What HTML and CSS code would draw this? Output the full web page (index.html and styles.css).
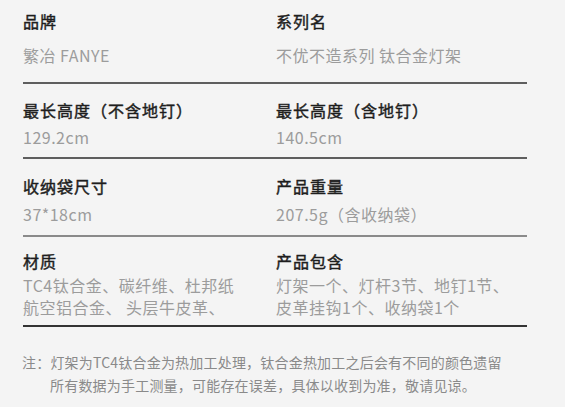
FILE: index.html
```html
<!DOCTYPE html>
<html lang="zh-CN">
<head>
<meta charset="utf-8">
<link rel="stylesheet" href="styles.css">
</head>
<body>
<div class="page">
  <div class="specs">
    <div class="row row-1">
      <div class="cell">
        <div class="title">品牌</div>
        <div class="value">繁冶 FANYE</div>
      </div>
      <div class="cell">
        <div class="title">系列名</div>
        <div class="value">不优不造系列 钛合金灯架</div>
      </div>
    </div>
    <div class="row row-2">
      <div class="cell">
        <div class="title">最长高度（不含地钉）</div>
        <div class="value">129.2cm</div>
      </div>
      <div class="cell">
        <div class="title">最长高度（含地钉）</div>
        <div class="value">140.5cm</div>
      </div>
    </div>
    <div class="row row-3">
      <div class="cell">
        <div class="title">收纳袋尺寸</div>
        <div class="value">37*18cm</div>
      </div>
      <div class="cell">
        <div class="title">产品重量</div>
        <div class="value">207.5g（含收纳袋）</div>
      </div>
    </div>
    <div class="row row-4">
      <div class="cell">
        <div class="title">材质</div>
        <div class="value">TC4钛合金、碳纤维、杜邦纸<br>航空铝合金、 头层牛皮革、</div>
      </div>
      <div class="cell">
        <div class="title">产品包含</div>
        <div class="value">灯架一个、灯杆3节、地钉1节、<br>皮革挂钩1个、收纳袋1个</div>
      </div>
    </div>
  </div>
  <div class="note">
    <div class="note-line">注：灯架为TC4钛合金为热加工处理，钛合金热加工之后会有不同的颜色遗留</div>
    <div class="note-line indent">所有数据为手工测量，可能存在误差，具体以收到为准，敬请见谅。</div>
  </div>
</div>
</body>
</html>
```

FILE: styles.css
```css
html, body {
  margin: 0;
  padding: 0;
  background: #f4f4f4;
}

body {
  font-family: "Noto Sans CJK SC", "Noto Sans", sans-serif;
  width: 565px;
  height: 407px;
  overflow: hidden;
}

.page {
  padding: 0 0 0 23px;
}

.specs {
  width: 504px;
}

.row {
  display: grid;
  grid-template-columns: 253px 1fr;
  border-bottom: 2px solid #5e5e5e;
}

.title {
  font-size: 16px;
  line-height: 22px;
  font-weight: 400;
  color: #1e1e1e;
  -webkit-text-stroke: 0.45px #1e1e1e;
  letter-spacing: 1px;
}

.value {
  font-size: 16px;
  line-height: 22px;
  color: #9c9c9c;
  letter-spacing: 0.5px;
}

.row-1 { padding: 10px 0 16px; }
.row-1 .title { margin-bottom: 12px; }

.row-2 { padding: 15px 0 9px; }
.row-2 .title { margin-bottom: 5px; }

.row-3 { padding: 16px 0 10px; border-bottom-color: #8a8a8a; }
.row-3 .title { margin-bottom: 6px; }

.row-4 { padding: 13px 0 7px; border-bottom-color: #333; }
.row-4 .title { margin-bottom: 2px; }

.note {
  margin-top: 24px;
  margin-left: -1px;
  font-size: 14px;
  line-height: 22.5px;
  color: #8a8a8a;
  letter-spacing: 0.2px;
}

.note-line.indent {
  padding-left: 28px;
}
```
